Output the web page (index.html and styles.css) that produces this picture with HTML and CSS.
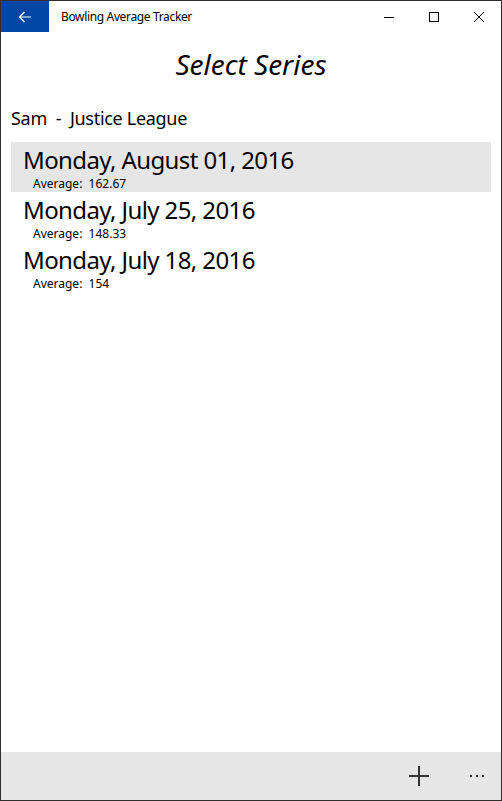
FILE: index.html
```html
<!DOCTYPE html>
<html lang="en">
<head>
<meta charset="utf-8">
<title>Bowling Average Tracker</title>
<link rel="stylesheet" href="styles.css">
</head>
<body>
<div class="window">
  <header class="titlebar">
    <div class="back">
      <svg width="14" height="12" viewBox="0 0 14 12"><path d="M13 6H1.5M6.5 1L1.5 6l5 5" fill="none" stroke="#fff" stroke-width="1.2"/></svg>
    </div>
    <div class="apptitle">Bowling Average Tracker</div>
    <div class="controls">
      <span class="ctl"><svg width="12" height="12" viewBox="0 0 12 12"><path d="M1 6.5h10" stroke="#000" stroke-width="1"/></svg></span>
      <span class="ctl"><svg width="12" height="12" viewBox="0 0 12 12"><rect x="1.5" y="1.5" width="9" height="9" fill="none" stroke="#000" stroke-width="1"/></svg></span>
      <span class="ctl"><svg width="12" height="12" viewBox="0 0 12 12"><path d="M1 1l10 10M11 1L1 11" stroke="#000" stroke-width="1"/></svg></span>
    </div>
  </header>
  <main class="content">
    <h1 class="pagetitle">Select Series</h1>
    <div class="bowler">Sam&nbsp;&nbsp;-&nbsp;&nbsp;Justice League</div>
    <ul class="series">
      <li class="item selected">
        <div class="date">Monday, August 01, 2016</div>
        <div class="avg">Average:&nbsp;&nbsp;162.67</div>
      </li>
      <li class="item">
        <div class="date">Monday, July 25, 2016</div>
        <div class="avg">Average:&nbsp;&nbsp;148.33</div>
      </li>
      <li class="item">
        <div class="date">Monday, July 18, 2016</div>
        <div class="avg">Average:&nbsp;&nbsp;154</div>
      </li>
    </ul>
  </main>
  <footer class="appbar">
    <span class="abtn add"><svg width="20" height="20" viewBox="0 0 20 20"><path d="M10 0v20M0 10h20" stroke="#333" stroke-width="2"/></svg></span>
    <span class="abtn more"><svg width="14" height="4" viewBox="0 0 14 4"><rect x="0" y="1" width="2" height="2" fill="#333"/><rect x="6" y="1" width="2" height="2" fill="#333"/><rect x="12" y="1" width="2" height="2" fill="#333"/></svg></span>
  </footer>
</div>
</body>
</html>
```
FILE: styles.css
```css
* { box-sizing: border-box; }
html, body { margin: 0; padding: 0; background: #fff; }
body { font-family: "Noto Sans", "Open Sans", sans-serif; color: #000; }
.window {
  width: 502px; height: 801px;
  border: 1px solid #2e2e2e;
  display: flex; flex-direction: column;
  background: #fff;
}
.titlebar { height: 31px; display: flex; align-items: center; flex: none; }
.back {
  width: 48px; height: 31px; background: #0046a6;
  display: flex; align-items: center; justify-content: center;
}
.apptitle { font-size: 12px; margin-left: 12px; flex: 1; letter-spacing: -0.35px; }
.controls { display: flex; height: 100%; }
.ctl { width: 45px; display: flex; align-items: center; justify-content: center; }
.content { flex: 1; }
.pagetitle {
  margin: 0; font-weight: normal; font-style: italic;
  font-size: 28px; text-align: center; padding-top: 13px; line-height: 38px;
}
.bowler { font-size: 18px; margin: 23px 0 0 10px; line-height: 24px; letter-spacing: -0.3px; }
.series { list-style: none; margin: 0; padding: 12px 10px 0; }
.item { height: 50px; padding: 0 0 0 12px; }
.item.selected { background: #e6e6e6; }
.date { font-size: 24px; line-height: 35px; letter-spacing: -0.6px; }
.avg { font-size: 12px; line-height: 14px; padding-left: 10px; }
.appbar {
  height: 48px; background: #e6e6e6; flex: none;
  display: flex; justify-content: flex-end; align-items: center;
}
.abtn { display: flex; justify-content: center; align-items: center; }
.add { width: 68px; }
.more { width: 48px; }
```
